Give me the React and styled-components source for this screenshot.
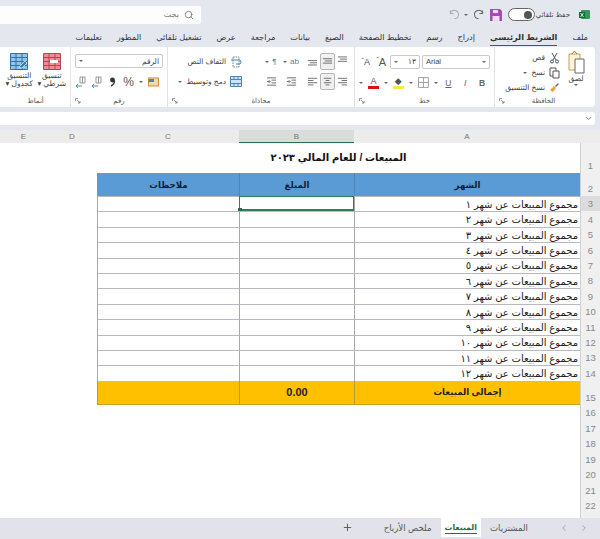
import React from "react";
import styled, { createGlobalStyle } from "styled-components";
import {
  FiSearch,
  FiChevronDown,
  FiChevronLeft,
  FiChevronRight,
  FiPlus,
} from "react-icons/fi";

const FONT = '"Liberation Sans", "DejaVu Sans", "Noto Sans", sans-serif';

const TABS = [
  "ملف",
  "الشريط الرئيسي",
  "إدراج",
  "رسم",
  "تخطيط الصفحة",
  "الصيغ",
  "بيانات",
  "مراجعة",
  "عرض",
  "تشغيل تلقائي",
  "المطور",
  "تعليمات",
];

const MONTHS = ["١", "٢", "٣", "٤", "٥", "٦", "٧", "٨", "٩", "١٠", "١١", "١٢"];
const AFTER_ROWS = [16, 17, 18, 19, 20, 21, 22];

const Lines = ({ kind }) => {
  const rows = {
    right: [[1, 11], [5, 11], [1, 11], [5, 11]],
    center: [[2, 10], [4, 8], [2, 10], [4, 8]],
    left: [[1, 11], [1, 7], [1, 11], [1, 7]],
  }[kind];
  return (
    <svg width="11" height="11" viewBox="0 0 12 12" stroke="#666" strokeWidth="1">
      {rows.map(([a, b], i) => (
        <line key={i} x1={a} x2={b} y1={2.5 + i * 2.4} y2={2.5 + i * 2.4} />
      ))}
    </svg>
  );
};

const VLines = ({ offset }) => (
  <svg width="11" height="11" viewBox="0 0 12 12" stroke="#666" strokeWidth="1">
    {[0, 2.4, 4.8].map((d, i) => (
      <line key={i} x1={i === 1 ? 3 : 1} x2="11" y1={offset + d} y2={offset + d} />
    ))}
  </svg>
);

const Indent = () => (
  <svg width="11" height="11" viewBox="0 0 12 12" stroke="#666" strokeWidth="1" fill="none">
    <path d="M1 2h10M1 10h10M6 4.5h5M6 7.5h5M1 6h3M3 4.5 4.5 6 3 7.5" />
  </svg>
);

const Launcher = () => (
  <svg width="6" height="6" viewBox="0 0 6 6" stroke="#777" strokeWidth="0.8" fill="none">
    <path d="M.5 3V.5H3M2 2l3 3M5 3v2H3" />
  </svg>
);

const PasteIcon = () => (
  <svg width="20" height="24" viewBox="0 0 20 24" fill="none">
    <path d="M3 4h11v16H3z" fill="#fff3dc" stroke="#c49a55" />
    <path d="M6 4 8.5 1 11 4" stroke="#a8823f" fill="#e8d8b5" />
    <path d="M9 9h9v14H9z" fill="#fff" stroke="#666" />
  </svg>
);

const CutIcon = () => (
  <svg width="11" height="12" viewBox="0 0 11 12" fill="none" stroke="#44546a">
    <path d="M3 1 7 8M8 1 4 8" />
    <circle cx="3" cy="9.5" r="1.5" />
    <circle cx="8" cy="9.5" r="1.5" />
  </svg>
);

const CopyIcon = () => (
  <svg width="11" height="12" viewBox="0 0 11 12" fill="#fff" stroke="#555">
    <path d="M1 1h6v8H1z" />
    <path d="M4 4h6v7H4z" />
  </svg>
);

const BrushIcon = () => (
  <svg width="11" height="11" viewBox="0 0 11 11">
    <path d="M1 8 5 4l2 2-3 4z" fill="#e8a33a" />
    <path d="m6 4 3-3 1 1-3 3z" fill="#6a6a6a" />
  </svg>
);

const WrapIcon = () => (
  <svg width="12" height="12" viewBox="0 0 12 12" fill="none" stroke="#5f7f9a">
    <path d="M3 1h6v10H3z" strokeDasharray="1.5 1" />
    <path d="M1 4h8a2 2 0 0 1 0 4H6" stroke="#4a7fa8" />
  </svg>
);

const MergeIcon = () => (
  <svg width="12" height="11" viewBox="0 0 12 11" fill="#cfe3f3" stroke="#4a86b8">
    <path d="M.5.5h11v10H.5z" />
    <path d="M.5 3.5h11M.5 7.5h11M4 .5v3M8 .5v3M4 7.5v3M8 7.5v3" />
  </svg>
);

const TableGridIcon = ({ tint, stroke, children }) => (
  <svg width="18" height="17" viewBox="0 0 18 17" fill={tint} stroke={stroke}>
    <path d="M.5.5h17v16H.5z" />
    <path d="M.5 4.5h17M.5 8.5h17M.5 12.5h17M6 .5v16M12 .5v16" />
    {children}
  </svg>
);

const BorderIcon = () => (
  <svg width="11" height="11" viewBox="0 0 11 11" fill="none" stroke="#a0a0a0">
    <path d="M.5.5h10v10H.5zM.5 5.5h10M5.5.5v10" />
  </svg>
);

const CurrencyIcon = () => (
  <svg width="11" height="10" viewBox="0 0 11 10">
    <rect x=".5" y="1" width="10" height="8" fill="#f3d9b0" stroke="#c98a3a" />
    <rect x="1" y="2" width="5" height="3" fill="#4a86b8" />
  </svg>
);

const CommaIcon = () => (
  <svg width="7" height="10" viewBox="0 0 7 10">
    <circle cx="3.5" cy="3" r="2.4" fill="#333" />
    <path d="M5.5 3.5C5.5 6 4 8 2 9" stroke="#333" strokeWidth="1.4" fill="none" />
  </svg>
);

const DecimalIcon = ({ color }) => (
  <svg width="11" height="12" viewBox="0 0 11 12" fill="none">
    <path d="M5 1h5v6H5z" stroke="#999" />
    <path d="M7.5 1v6" stroke="#999" />
    <path d="M1 10h6M3 8l-2 2 2 2" stroke={color} />
  </svg>
);

const ExcelIcon = () => (
  <svg width="11" height="11" viewBox="0 0 11 11">
    <rect x="2" y="1" width="9" height="9" rx="1" fill="#2f9a5a" />
    <rect x="0" y="3" width="6" height="6" fill="#116b3a" />
    <path d="m1.5 4 3 4m0-4-3 4" stroke="#fff" strokeWidth=".8" />
  </svg>
);

const SaveIcon = () => (
  <svg width="12" height="12" viewBox="0 0 12 12">
    <path d="M0 0h10l2 2v10H0z" fill="#a14bb3" />
    <path d="M3 1h5v3H3zM2.5 7h7v5h-7z" fill="#f2d9f5" />
  </svg>
);

const UndoIcon = ({ flip, color }) => (
  <FlipSvg $flip={flip} width="11" height="11" viewBox="0 0 12 12" fill="none" stroke={color} strokeWidth="1.1">
    <path d="M1.5 1.5v3.5H5M1.5 5A4.5 4.5 0 1 1 6 10.5" />
  </FlipSvg>
);

const App = () => (
  <>
    <GlobalStyle />
    <Page dir="rtl">
      <TitleBar>
        <ExcelIcon />
        <AutoSave>حفظ تلقائي</AutoSave>
        <Toggle>
          <ToggleKnob />
        </Toggle>
        <TitleTool $gap={6}>
          <SaveIcon />
        </TitleTool>
        <TitleTool $gap={6}>
          <UndoIcon flip color="#666" />
        </TitleTool>
        <TitleTool $gap={5}>
          <TinyChevron />
        </TitleTool>
        <TitleTool $gap={4}>
          <UndoIcon color="#aaa" />
        </TitleTool>
        <SearchBox>
          <FiSearch size={10} color="#777" />
          <SearchText>بحث</SearchText>
        </SearchBox>
      </TitleBar>

      <TabBar>
        {TABS.map((tab, i) => (
          <Tab key={tab} $active={i === 1}>
            {tab}
          </Tab>
        ))}
      </TabBar>

      <Ribbon>
        <Group $width={101} $start={7}>
          <GroupBody>
            <PasteColumn>
              <PasteIcon />
              <SmallLabel>لصق</SmallLabel>
              <TinyChevron />
            </PasteColumn>
            <ClipboardList>
              <ClipItem>
                <CutIcon />
                <SmallLabel>قص</SmallLabel>
              </ClipItem>
              <ClipItem>
                <CopyIcon />
                <SmallLabel>نسخ</SmallLabel>
                <TinyChevron />
              </ClipItem>
              <ClipItem>
                <BrushIcon />
                <SmallLabel>نسخ التنسيق</SmallLabel>
              </ClipItem>
            </ClipboardList>
          </GroupBody>
          <GroupFooter>
            <span />
            <FooterLabel>الحافظة</FooterLabel>
            <Launcher />
          </GroupFooter>
        </Group>

        <Group $width={140}>
          <GroupBody $column>
            <ToolRow>
              <Combo $width={68}>
                <TinyChevron />
                <ComboText>Arial</ComboText>
              </Combo>
              <Combo $width={30}>
                <ComboText>١٣</ComboText>
                <TinyChevron />
              </Combo>
              <FontStep>A</FontStep>
              <FontStep $small>A</FontStep>
            </ToolRow>
            <ToolRow>
              <StyleLetter $weight="bold">B</StyleLetter>
              <StyleLetter $italic>I</StyleLetter>
              <StyleLetter $underline>U</StyleLetter>
              <TinyChevron />
              <BorderIcon />
              <TinyChevron />
              <ColorTool $color="#f5e94a">◆</ColorTool>
              <TinyChevron />
              <ColorTool $color="#e01010">A</ColorTool>
              <TinyChevron />
            </ToolRow>
          </GroupBody>
          <GroupFooter>
            <span />
            <FooterLabel>خط</FooterLabel>
            <Launcher />
          </GroupFooter>
        </Group>

        <Group $width={187}>
          <GroupBody>
            <AlignGrid>
              <AlignCell><VLines offset={1} /></AlignCell>
              <AlignCell $selected><VLines offset={3} /></AlignCell>
              <AlignCell><VLines offset={5} /></AlignCell>
              <AlignCell><Lines kind="right" /></AlignCell>
              <AlignCell $selected><Lines kind="center" /></AlignCell>
              <AlignCell><Lines kind="left" /></AlignCell>
            </AlignGrid>
            <IndentGrid>
              <AlignCell>
                <OrientText>ab</OrientText>
                <TinyChevron />
              </AlignCell>
              <AlignCell>
                <OrientText>¶</OrientText>
                <TinyChevron />
              </AlignCell>
              <AlignCell><Indent /></AlignCell>
              <AlignCell><Indent /></AlignCell>
            </IndentGrid>
            <WrapList>
              <ClipItem>
                <WrapIcon />
                <SmallLabel>التفاف النص</SmallLabel>
              </ClipItem>
              <ClipItem>
                <MergeIcon />
                <SmallLabel>دمج وتوسيط</SmallLabel>
                <TinyChevron />
              </ClipItem>
            </WrapList>
          </GroupBody>
          <GroupFooter>
            <span />
            <FooterLabel>محاذاة</FooterLabel>
            <Launcher />
          </GroupFooter>
        </Group>

        <Group $width={97}>
          <GroupBody $column>
            <NumberCombo>
              <Combo $width={88}>
                <ComboText>الرقم</ComboText>
                <TinyChevron />
              </Combo>
            </NumberCombo>
            <NumberRow>
              <NumberTool><CurrencyIcon /></NumberTool>
              <TinyChevron />
              <NumberTool $large>%</NumberTool>
              <NumberTool><CommaIcon /></NumberTool>
              <NumberTool><DecimalIcon color="#4a86b8" /></NumberTool>
              <NumberTool><DecimalIcon color="#4a9a8a" /></NumberTool>
            </NumberRow>
          </GroupBody>
          <GroupFooter>
            <span />
            <FooterLabel>رقم</FooterLabel>
            <Launcher />
          </GroupFooter>
        </Group>

        <Group $width={69} $last>
          <GroupBody>
            <StyleButton>
              <TableGridIcon tint="#f28a96" stroke="#a84a55">
                <path d="M7 7h8v3H7z" fill="#fff" stroke="none" />
              </TableGridIcon>
              <SmallLabel>تنسيق شرطي ▾</SmallLabel>
            </StyleButton>
            <StyleButton>
              <TableGridIcon tint="#8ec4ee" stroke="#39709c">
                <path d="m9 14 6-6 2 2-5 5z" fill="#3d7fb3" stroke="#fff" strokeWidth=".6" />
              </TableGridIcon>
              <SmallLabel>التنسيق كجدول ▾</SmallLabel>
            </StyleButton>
          </GroupBody>
          <GroupFooter $center>
            <FooterLabel>أنماط</FooterLabel>
          </GroupFooter>
        </Group>
      </Ribbon>

      <FormulaBar>
        <FiChevronDown size={9} color="#666" />
      </FormulaBar>

      <Sheet>
        <SheetRow $height={13} $head>
          <Corner />
          <ColHead>A</ColHead>
          <ColHead $selected>B</ColHead>
          <ColHead>C</ColHead>
          <ColHead>D</ColHead>
          <ColHead>E</ColHead>
        </SheetRow>

        <SheetRow $height={30}>
          <RowNumber>1</RowNumber>
          <SheetTitle>المبيعات / للعام المالي ٢٠٢٣</SheetTitle>
        </SheetRow>

        <SheetRow $height={23}>
          <RowNumber>2</RowNumber>
          <HeaderCell>الشهر</HeaderCell>
          <HeaderCell>المبلغ</HeaderCell>
          <HeaderCell>ملاحظات</HeaderCell>
        </SheetRow>

        {MONTHS.map((m, i) => (
          <SheetRow $height={15.42} key={m}>
            <RowNumber $selected={i === 0}>{i + 3}</RowNumber>
            <DataCell>مجموع المبيعات عن شهر {m}</DataCell>
            <DataCell $active={i === 0}>{i === 0 && <FillHandle />}</DataCell>
            <DataCell />
          </SheetRow>
        ))}

        <SheetRow $height={24}>
          <RowNumber>15</RowNumber>
          <TotalCell>إجمالي المبيعات</TotalCell>
          <TotalCell>0.00</TotalCell>
          <TotalCell />
        </SheetRow>

        {AFTER_ROWS.map((n) => (
          <SheetRow $height={15.5} key={n}>
            <RowNumber>{n}</RowNumber>
          </SheetRow>
        ))}

        <SheetFiller>
          <RowFiller />
        </SheetFiller>
      </Sheet>

      <SheetTabs>
        <FiChevronRight size={10} color="#999" />
        <FiChevronLeft size={10} color="#999" />
        <SheetTab>المشتريات</SheetTab>
        <SheetTab $active>
          <ActiveName>المبيعات</ActiveName>
        </SheetTab>
        <SheetTab>ملخص الأرباح</SheetTab>
        <AddSheet>
          <FiPlus size={11} color="#555" />
        </AddSheet>
      </SheetTabs>
    </Page>
  </>
);

const GlobalStyle = createGlobalStyle`
  html, body {
    margin: 0;
    padding: 0;
    background: #e5e7ef;
  }
  * {
    box-sizing: border-box;
  }
`;

const Page = styled.div`
  width: 600px;
  height: 539px;
  overflow: hidden;
  background: #e5e7ef;
  font-family: ${FONT};
  color: #333;
  display: flex;
  flex-direction: column;
`;

const FlipSvg = styled.svg`
  transform: ${(p) => (p.$flip ? "scaleX(-1)" : "none")};
`;

const TitleBar = styled.div`
  height: 29px;
  display: flex;
  align-items: center;
  padding-right: 10px;
`;

const TitleTool = styled.div`
  display: flex;
  align-items: center;
  margin-right: ${(p) => p.$gap}px;
`;

const AutoSave = styled.span`
  font-size: 7px;
  color: #444;
  width: 32px;
  margin-right: 9px;
  white-space: nowrap;
`;

const Toggle = styled.div`
  width: 27px;
  height: 13px;
  margin-right: 3px;
  border: 1px solid #666;
  border-radius: 7px;
  background: #fff;
  display: flex;
  align-items: center;
  padding-right: 2px;
`;

const ToggleKnob = styled.div`
  width: 8px;
  height: 8px;
  border-radius: 50%;
  background: #555;
`;

const SearchBox = styled.div`
  margin-right: auto;
  width: 201px;
  height: 18px;
  background: #fdfdfe;
  border-radius: 0 2px 2px 0;
  display: flex;
  align-items: center;
  gap: 5px;
  padding-right: 7px;
`;

const SearchText = styled.span`
  font-size: 8px;
  color: #777;
`;

const TabBar = styled.div`
  height: 18px;
  display: flex;
  align-items: flex-start;
  gap: 15px;
  padding: 2px 12px 0 0;
`;

const Tab = styled.div`
  font-size: 8.2px;
  height: 15px;
  line-height: 13px;
  white-space: nowrap;
  color: #333;
  font-weight: ${(p) => (p.$active ? "bold" : "normal")};
  border-bottom: ${(p) => (p.$active ? "1.5px solid #217346" : "none")};
`;

const Ribbon = styled.div`
  height: 60px;
  width: 595px;
  margin-right: 5px;
  background: #fff;
  border-top-right-radius: 4px;
  border-bottom-right-radius: 4px;
  display: flex;
`;

const Group = styled.div`
  width: ${(p) => p.$width}px;
  flex: none;
  display: flex;
  flex-direction: column;
  padding: 3px ${(p) => p.$start || 4}px 1px 4px;
  border-left: ${(p) => (p.$last ? "none" : "1px solid #e2e2e2")};
`;

const GroupBody = styled.div`
  flex: 1;
  display: flex;
  flex-direction: ${(p) => (p.$column ? "column" : "row")};
  gap: ${(p) => (p.$column ? "5px" : "4px")};
`;

const GroupFooter = styled.div`
  height: 10px;
  display: grid;
  grid-template-columns: ${(p) => (p.$center ? "1fr" : "1fr auto 1fr")};
  align-items: center;
  justify-items: ${(p) => (p.$center ? "center" : "end")};
`;

const FooterLabel = styled.span`
  font-size: 7px;
  color: #555;
`;

const SmallLabel = styled.span`
  font-size: 7.5px;
  color: #444;
  line-height: 8px;
  white-space: nowrap;
`;

const TinyChevron = styled.i`
  flex: none;
  width: 0;
  height: 0;
  border-left: 2px solid transparent;
  border-right: 2px solid transparent;
  border-top: 2px solid #666;
`;

const PasteColumn = styled.div`
  width: 24px;
  display: flex;
  flex-direction: column;
  align-items: center;
  gap: 1px;
`;

const ClipboardList = styled.div`
  display: flex;
  flex-direction: column;
  gap: 2px;
  padding-top: 1px;
`;

const ClipItem = styled.div`
  height: 13px;
  display: flex;
  align-items: center;
  gap: 4px;
`;

const ToolRow = styled.div`
  height: 15px;
  display: flex;
  align-items: center;
  gap: 5px;
  &:first-child {
    margin-top: 4px;
    gap: 2px;
  }
  &:last-child {
    margin-top: 1px;
    padding-right: 2px;
  }
`;

const Combo = styled.div`
  width: ${(p) => p.$width}px;
  height: 14px;
  border: 1px solid #c8c8c8;
  border-radius: 2px;
  display: flex;
  align-items: center;
  justify-content: space-between;
  padding: 0 3px;
  flex: none;
  background: #fff;
`;

const ComboText = styled.span`
  font-size: 7.5px;
  color: #444;
`;

const FontStep = styled.span`
  font-size: ${(p) => (p.$small ? "9px" : "11px")};
  color: #555;
  width: 14px;
  text-align: center;
  &::after {
    content: "ˆ";
    font-size: 7px;
    vertical-align: top;
  }
`;

const StyleLetter = styled.span`
  width: 12px;
  text-align: center;
  font-size: 8.5px;
  color: #666;
  font-weight: ${(p) => p.$weight || "normal"};
  font-style: ${(p) => (p.$italic ? "italic" : "normal")};
  text-decoration: ${(p) => (p.$underline ? "underline" : "none")};
`;

const ColorTool = styled.span`
  font-size: 9px;
  line-height: 9px;
  color: #555;
  border-bottom: 3px solid ${(p) => p.$color};
  width: 11px;
  text-align: center;
`;

const AlignGrid = styled.div`
  display: grid;
  grid-template-columns: repeat(3, 15px);
  grid-auto-rows: 17px;
  row-gap: 3px;
  padding-top: 3px;
`;

const IndentGrid = styled(AlignGrid)`
  grid-template-columns: 20px 20px;
`;

const AlignCell = styled.div`
  display: flex;
  align-items: center;
  justify-content: center;
  gap: 3px;
  border: ${(p) => (p.$selected ? "1px solid #b5b5b5" : "1px solid transparent")};
  background: ${(p) => (p.$selected ? "#f0f0f0" : "transparent")};
  border-radius: 2px;
`;

const OrientText = styled.span`
  font-size: 8px;
  color: #5f7f9a;
`;

const WrapList = styled.div`
  display: flex;
  flex-direction: column;
  gap: 7px;
  padding-top: 5px;
  margin-right: 15px;
`;

const NumberCombo = styled.div`
  padding-top: 4px;
`;

const NumberRow = styled.div`
  display: flex;
  align-items: center;
  gap: 5px;
  padding: 3px 4px 0 0;
`;

const NumberTool = styled.span`
  font-size: ${(p) => (p.$large ? "12px" : "11px")};
  color: #555;
  width: 11px;
  height: 12px;
  display: flex;
  align-items: center;
  justify-content: center;
`;

const StyleButton = styled.div`
  width: 30px;
  display: flex;
  flex-direction: column;
  align-items: center;
  text-align: center;
  gap: 2px;
  padding-top: 3px;
  span {
    white-space: normal;
  }
`;

const FormulaBar = styled.div`
  margin: 5px 5px 0 0;
  width: 595px;
  height: 13px;
  background: #fff;
  border-radius: 0 3px 3px 0;
  display: flex;
  align-items: center;
  padding-right: 2px;
`;

const Sheet = styled.div`
  margin-top: 5px;
  flex: 1;
  background: #fff;
  display: flex;
  flex-direction: column;
`;

const SheetRow = styled.div`
  height: ${(p) => p.$height}px;
  flex: none;
  display: grid;
  grid-template-columns: 20px 226px 115px 142px 50px 47px;
  background: ${(p) => (p.$head ? "#ececec" : "#fff")};
`;

const Corner = styled.div`
  background: #ececec;
`;

const ColHead = styled.div`
  font-size: 8px;
  color: #777;
  display: flex;
  align-items: center;
  justify-content: center;
  background: ${(p) => (p.$selected ? "#d9dcd9" : "#ececec")};
  border-bottom: ${(p) => (p.$selected ? "1px solid #217346" : "none")};
`;

const RowNumber = styled.div`
  font-size: 9.5px;
  color: #888;
  display: flex;
  align-items: flex-end;
  justify-content: center;
  padding-bottom: 1px;
  background: ${(p) => (p.$selected ? "#dcdcdc" : "#f0f0f0")};
  border-left: 1px solid #d0d0d0;
  line-height: 12px;
`;

const SheetTitle = styled.div`
  grid-column: 2 / 5;
  font-size: 10px;
  font-weight: bold;
  color: #111;
  display: flex;
  align-items: center;
  justify-content: center;
  padding-bottom: 1px;
`;

const HeaderCell = styled.div`
  background: #5b9bd5;
  color: #0d1b3a;
  font-size: 8.6px;
  font-weight: bold;
  display: flex;
  align-items: center;
  justify-content: center;
  border-left: 1px solid #4c86bb;
  &:nth-child(4) {
    border-left: 1px solid #5b9bd5;
  }
`;

const DataCell = styled.div`
  position: relative;
  font-size: 10px;
  color: #222;
  display: flex;
  align-items: center;
  padding-right: 2px;
  white-space: nowrap;
  border-top: 1px solid #b9b9c4;
  border-left: 1px solid #a8a8b2;
  ${(p) =>
    p.$active &&
    `
    border: 1px solid #2f7d52;
    border-bottom-width: 2px;
  `}
`;

const FillHandle = styled.i`
  position: absolute;
  left: -2px;
  bottom: -3px;
  width: 4px;
  height: 4px;
  background: #217346;
`;

const TotalCell = styled.div`
  background: #ffc000;
  color: #222;
  font-size: 8.6px;
  font-weight: bold;
  display: flex;
  align-items: center;
  justify-content: center;
  border-left: 1px solid #b79a3a;
  border-bottom: 1px solid #c9a31f;
  &:nth-child(3) {
    font-size: 11px;
  }
`;

const SheetFiller = styled.div`
  flex: 1;
  display: flex;
`;

const RowFiller = styled.div`
  width: 20px;
  background: #f0f0f0;
  border-left: 1px solid #d0d0d0;
`;

const SheetTabs = styled.div`
  height: 21px;
  flex: none;
  background: #e2e3ea;
  display: flex;
  align-items: stretch;
  padding: 0 11px 2px 0;
  > svg {
    align-self: center;
    margin-left: 10px;
  }
  > svg + svg {
    margin-left: 22px;
  }
`;

const SheetTab = styled.div`
  font-size: ${(p) => (p.$active ? "7.8px" : "8.6px")};
  color: ${(p) => (p.$active ? "#217346" : "#555")};
  background: ${(p) => (p.$active ? "#fff" : "transparent")};
  font-weight: ${(p) => (p.$active ? "bold" : "normal")};
  padding: 0 ${(p) => (p.$active ? "4px" : "9px")};
  display: flex;
  align-items: center;
  justify-content: center;
  white-space: nowrap;
`;

const ActiveName = styled.span`
  border-bottom: 1px solid #217346;
  line-height: 11px;
`;

const AddSheet = styled.div`
  display: flex;
  align-items: center;
  margin-right: 22px;
`;

export default App;
